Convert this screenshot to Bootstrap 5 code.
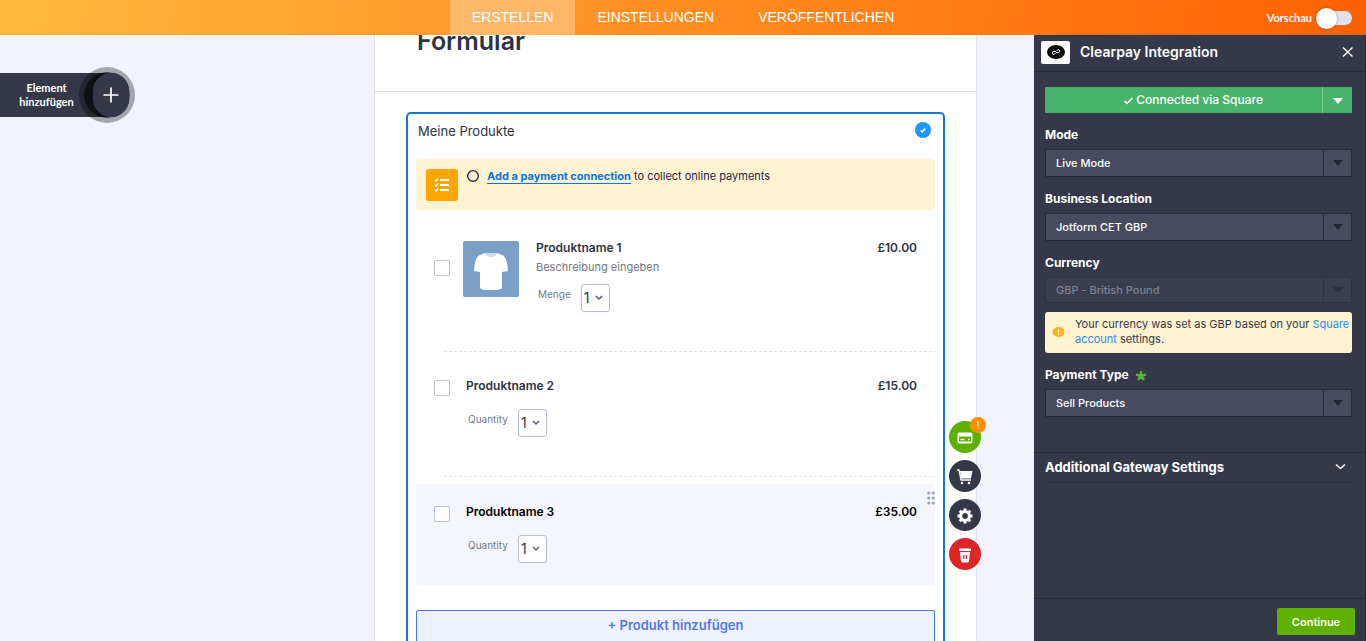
<!DOCTYPE html>
<html lang="de">
<head>
<meta charset="utf-8">
<meta name="viewport" content="width=device-width, initial-scale=1">
<title>Formular erstellen</title>
<link href="https://cdn.jsdelivr.net/npm/bootstrap@5.3.0/dist/css/bootstrap.min.css" rel="stylesheet">
<style>
body{font-family:Inter,"Liberation Sans",sans-serif;font-size:13px;line-height:18px;color:#2c3345;background:#f3f3fe}
.topbar{height:35px;background:linear-gradient(95deg,#ffb93f 0%,#ff9a2b 35%,#ff7a14 72%,#ff6100 100%);z-index:5;display:grid;grid-template-columns:1fr auto 1fr}
.topbar .nav{grid-column:2}
.topbar .nav-link{color:#fff;font-family:"Liberation Sans",Inter,sans-serif;font-size:14px;line-height:35px;padding:0 22px}
.topbar .nav-link.active{background:rgba(255,255,255,.3)}
.preview{font:700 11px/16px Lato,Inter,sans-serif;color:#fff;padding-right:14px}
.topbar .form-check-input{width:32px;height:14px;margin:0;border:0;background:#e2e3ea;border-radius:7px;position:relative;overflow:visible;appearance:none}
.topbar .form-check-input::before{content:"";position:absolute;left:-4px;top:-3px;width:21px;height:21px;border-radius:50%;background:#fff;box-shadow:0 0 3px rgba(0,0,0,.3)}
.workspace{display:grid;grid-template-columns:1fr 603px 57px 332px;grid-template-rows:100%;height:calc(100vh - 35px)}
.add-element{width:129px;height:44px;margin-top:38px;border:0;padding:0;background:#343849;color:#fff;border-radius:0 18px 18px 0;font:700 11px/14px Lato,Inter,sans-serif}
.add-element .caption{width:93px;text-align:center}
.halo{position:absolute;left:79px;top:-6px;width:56px;height:56px;border-radius:50%;border:5px solid rgba(0,0,0,.32);background:rgba(0,0,0,.7);background-clip:padding-box}
.knob{position:absolute;right:0;top:0;width:36px;height:44px;border-radius:18px;background:#343849}
.sheet{background:#fff;border-left:1px solid #e3e4f2;border-right:1px solid #e3e4f2}
.sheet-head{display:flow-root;height:57px;border-bottom:1px solid #d7d8e6;padding-left:42px}
.sheet-head h1{font-size:25px;line-height:32px;font-weight:600;margin:-10px 0 0}
.products{margin:20px 31px 0;border:2px solid #1577d2;border-radius:5px 5px 0 0;padding:0 8px;height:560px}
.group-title{height:45px;padding:8px 4px 0 2px;font-weight:400}
.notice{background:#fff3d1;border-radius:4px;height:51px;padding:10px;font-size:11px;line-height:14px;color:#1f2244}
.notice-icon{width:32px;height:32px;border-radius:3px;background:#ffa500}
.notice a{color:#0a75dd;font-weight:700;text-decoration:none;border-bottom:1px solid #0a75dd}
.product{padding:19px 18px 22px;position:relative}
.product .form-check-input{width:16px;height:16px;margin:3px 0 0;border:1px solid #bcc4d8;border-radius:2px;background-color:#fff;flex-shrink:0}
.product h2{font-size:12px;line-height:18px;font-weight:600;margin:0}
.price{font-size:12px;font-weight:600;line-height:18px}
.describe{font-size:11px;line-height:20px;color:#747781}
.amount{font-size:10px;line-height:20px;color:#747b8c;margin:14px 0 0 2px;gap:10px}
.amount select{appearance:none;width:29px;height:28px;padding:0 2px;border:1px solid #b8bfd0;border-radius:3px;font-size:14px;color:#2c3345;background:#fff url("data:image/svg+xml,%3Csvg xmlns='http://www.w3.org/2000/svg' width='8' height='6'%3E%3Cpath d='M1 1l3 3 3-3' fill='none' stroke='%23556075' stroke-width='1.5'/%3E%3C/svg%3E") no-repeat 13px 10px}
.first-product{margin-top:10px;height:131px}
.first-product .form-check-input{margin-top:21px}
.first-product .amount{margin-top:7px}
.shirt{margin:2px 17px 0 13px}
.second-product{height:118px;margin-top:6px}
.rule{height:1px;margin-left:28px;background:repeating-linear-gradient(90deg,#e3e3e6 0 3px,transparent 3px 5px)}
.third-product{background:#f5f6fc;border-radius:4px;margin-top:7px;height:101px;color:#000}
.grip{position:absolute;right:0;top:7px}
.add-product{margin-top:25px;height:50px;border:1px solid #4d75e8;border-radius:2px 2px 0 0;background:#edf2ff;color:#5476e8;font-size:13px;line-height:28px;padding:0;font-weight:600;display:flex;justify-content:center}
.tools{position:absolute;left:574px;top:386px;gap:7px}
.tools button{width:32px;height:32px;border:0;padding:0;border-radius:50%;background:#343849;position:relative}
.tools .pay{background:#5fb000}
.tools .trash{background:#dc2626}
.alert-dot{position:absolute;right:-5px;top:-4px;width:16px;height:16px;border-radius:50%;background:#fa8f00;color:#fff;font-size:11px;line-height:16px}
.panel{background:#343849;color:#fff;border-right:1px solid #252836}
.panel-head{height:37px;border-bottom:1px solid #272b3a;padding:0 11px 2px 7px}
.logo{width:29px;height:23px;border-radius:2px;background:#fff}
.panel-head h2{font-size:14px;line-height:18px;font-weight:600;margin:0 auto 0 10px}
.panel-body{padding:15px 13px 0 11px}
.panel .connected{background:#47b36c;color:#fff;border:0;border-radius:0;height:26px;font-size:12px;line-height:26px;padding:0 0 0 20px;font-weight:500}
.panel .connected.more{flex:0 0 30px;border-left:1px solid #82d29c;padding:0}
.panel label{font-size:12px;line-height:16px;font-weight:700;display:block}
.field{margin-top:14px}
.field select{appearance:none;display:block;width:100%;height:28px;margin-top:6px;padding:0 38px 0 10px;border:1px solid #262a38;border-radius:1px;color:#fff;font-size:11px;font-weight:500;background:url("data:image/svg+xml,%3Csvg xmlns='http://www.w3.org/2000/svg' width='28' height='28'%3E%3Cpath d='M0 0h1v28H0z' fill='%23262a38'/%3E%3Cpath d='M10 11h10l-5 6z' fill='%23222633'/%3E%3C/svg%3E") no-repeat right center #464b60}
.field select:disabled{opacity:1;color:#7e8291;background:url("data:image/svg+xml,%3Csvg xmlns='http://www.w3.org/2000/svg' width='28' height='28'%3E%3Cpath d='M0 0h1v28H0z' fill='%232d3141'/%3E%3Cpath d='M10 11h10l-5 6z' fill='%232b2f3f'/%3E%3C/svg%3E") no-repeat right center #3a3e50;border-color:#2d3141;height:26px}
.currency-note{margin-top:9px;background:#fff3d1;color:#343849;border-radius:3px;height:41px;padding:5px 0 0 7px;font-size:11px;line-height:15px}
.note-mark{margin:6px 10px 0 0}
.currency-note a{color:#2490f5;text-decoration:none}
.more-settings{border:0;border-top:1px solid #272b3a;margin-top:35px;color:#fff;background:none;padding:6px 15px 0 11px;text-align:left;font-size:13px;line-height:16px;font-weight:700}
.more-settings .inner{height:23px}
.under{height:1px;flex-shrink:0;background:#2b2f3e;margin:0 13px 0 11px}
.panel-foot{border-top:1px solid #272b3a;height:43px;padding:9px 10px 0}
.continue{width:78px;height:27px;border:0;border-radius:2px;background:#5fb000;color:#fff;font-size:11px;font-weight:600;padding:0}
</style>
</head>
<body class="overflow-hidden">
<header class="topbar position-relative">
  <nav class="nav">
    <a class="nav-link active" href="#">ERSTELLEN</a>
    <a class="nav-link" href="#">EINSTELLUNGEN</a>
    <a class="nav-link" href="#">VERÖFFENTLICHEN</a>
  </nav>
  <div class="d-flex align-items-center justify-content-end gap-2 preview">
    <label for="preview">Vorschau</label>
    <input class="form-check-input" type="checkbox" role="switch" id="preview">
  </div>
</header>
<div class="workspace">
  <div>
    <button class="add-element position-relative d-block" type="button">
      <span class="halo"></span>
      <span class="caption d-block position-relative">Element<br>hinzufügen</span>
      <span class="knob d-flex align-items-center justify-content-center"><svg width="16" height="16" viewBox="0 0 16 16" stroke="#fff" stroke-width="1.700"><path d="M8 .5v15M.5 8h15"/></svg></span>
    </button>
  </div>
  <main class="sheet position-relative">
    <div class="sheet-head"><h1>Formular</h1></div>
    <section class="products">
      <div class="group-title d-flex justify-content-between"><span>Meine Produkte</span>
        <svg width="16" height="16" viewBox="0 0 16 16"><circle cx="8" cy="8" r="8" fill="#2196ff"/><path d="M5.500 8.300l1.700 1.700 3-3.500" fill="none" stroke="#fff" stroke-width="1.500"/></svg>
      </div>
      <div class="notice d-flex">
        <span class="notice-icon d-flex align-items-center justify-content-center"><svg width="16" height="16" viewBox="0 0 16 16" fill="none" stroke="#fff" stroke-width="1.600"><path d="M6 3h9M6 8h9M6 13h9" stroke-width="1.800"/><path d="M1 3l1 1 2-2.500M1 8l1 1 2-2.500M1 13l1 1 2-2.500"/></svg></span>
        <svg class="mx-2" width="13" height="14" viewBox="0 0 13 14"><circle cx="7" cy="7" r="5.300" fill="none" stroke="#1f2244" stroke-width="1.300"/></svg>
        <span><a href="#">Add a payment connection</a> to collect online payments</span>
      </div>
      <div class="product first-product d-flex">
        <input class="form-check-input" type="checkbox" aria-label="Produktname 1">
        <svg class="shirt" width="56" height="56" viewBox="0 0 56 56"><rect width="56" height="56" rx="2" fill="#7aa0c8"/><path d="M22 12h12l5 2q5 1 6 16l-6 1v16q-2 2-5 2H22q-3 0-5-2V31l-6-1q1-15 6-16z" fill="#fff"/><path d="M22 12h12q-1 4-6 4t-6-4z" fill="#cfdceb"/></svg>
        <div class="flex-fill"><h2>Produktname 1</h2><div class="describe">Beschreibung eingeben</div>
          <div class="amount d-flex"><label for="q1">Menge</label><select id="q1"><option>1</option></select></div></div>
        <span class="price">£10.00</span>
      </div>
      <div class="rule"></div>
      <div class="product second-product d-flex">
        <input class="form-check-input me-3" type="checkbox" aria-label="Produktname 2">
        <div class="flex-fill"><h2>Produktname 2</h2>
          <div class="amount d-flex"><label for="q2">Quantity</label><select id="q2"><option>1</option></select></div></div>
        <span class="price">£15.00</span>
      </div>
      <div class="rule"></div>
      <div class="product third-product d-flex">
        <input class="form-check-input me-3" type="checkbox" aria-label="Produktname 3">
        <div class="flex-fill"><h2>Produktname 3</h2>
          <div class="amount d-flex"><label for="q3">Quantity</label><select id="q3"><option>1</option></select></div></div>
        <span class="price">£35.00</span>
        <svg class="grip" width="8" height="14" viewBox="0 0 8 14" fill="#9ea2b5"><circle cx="1.800" cy="2" r="1.600"/><circle cx="6.300" cy="2" r="1.600"/><circle cx="1.800" cy="7" r="1.600"/><circle cx="6.300" cy="7" r="1.600"/><circle cx="1.800" cy="12" r="1.600"/><circle cx="6.300" cy="12" r="1.600"/></svg>
      </div>
      <button class="add-product w-100" type="button">+ Produkt hinzufügen</button>
    </section>
    <div class="tools d-flex flex-column">
      <button class="pay" type="button" aria-label="Zahlung"><svg width="16" height="12" viewBox="0 0 16 12"><rect x=".5" y=".5" width="15" height="11" rx="2" fill="#fff"/><path d="M2 4.500h12v5H2z" fill="#5fb000"/><path d="M3.500 7.500h4M11 7.500h1.500" stroke="#fff" stroke-width="1.500"/></svg><span class="alert-dot">!</span></button>
      <button type="button" aria-label="Warenkorb"><svg width="16" height="16" viewBox="0 0 16 16"><path d="M0 1h2l2 10h10" fill="none" stroke="#fff" stroke-width="1.300"/><path d="M3 2h12.500l-1.500 7.500H4.300z" fill="#fff"/><circle cx="5" cy="14" r="1.300" fill="#fff"/><circle cx="12" cy="14" r="1.300" fill="#fff"/></svg></button>
      <button type="button" aria-label="Einstellungen"><svg width="16" height="16" viewBox="0 0 16 16" fill="none" stroke="#fff"><circle cx="8" cy="8" r="4.400" stroke-width="3"/><path d="M8 .5v3M8 12.500v3M.5 8h3M12.500 8h3M2.700 2.700l2 2M11.300 11.300l2 2M2.700 13.300l2-2M11.300 4.700l2-2" stroke-width="3"/></svg></button>
      <button class="trash" type="button" aria-label="Löschen"><svg width="14" height="16" viewBox="0 0 14 16"><path d="M1 1.500h12v2.500H1z" fill="#fff"/><path d="M2 5h10l-1 9q-.2 1.500-2 1.500H5Q3.200 15.500 3 14z" fill="#fff"/><path d="M5.800 8v4M8.300 8v4" stroke="#dc2626" stroke-width="1.200"/></svg></button>
    </div>
  </main>
  <div></div>
  <aside class="panel d-flex flex-column">
    <div class="panel-head d-flex align-items-center">
      <span class="logo d-flex align-items-center justify-content-center"><svg width="18" height="14" viewBox="0 0 18 14"><ellipse cx="9" cy="7" rx="9" ry="7"/><path d="M8.500 8.500L6 9.500 5 7.500 8 6l2 2 3-1.500-1-2L9.500 5.500" fill="none" stroke="#fff"/></svg></span>
      <h2>Clearpay Integration</h2>
      <button type="button" aria-label="Schließen" class="border-0 bg-transparent p-0 d-flex"><svg width="12" height="12" viewBox="0 0 12 12" stroke="#fff" stroke-width="1.400"><path d="M1 1.500l9.500 9M10.500 1.500l-9.500 9"/></svg></button>
    </div>
    <div class="panel-body">
      <div class="d-flex">
        <button class="connected flex-fill" type="button"><svg width="9" height="8" viewBox="0 0 9 8" fill="none" stroke="#fff" stroke-width="1.500"><path d="M.5 4l2.500 2.500L8.500 1"/></svg> Connected via Square</button>
        <button class="connected more" type="button" aria-label="Mehr"><svg width="10" height="6" viewBox="0 0 10 6"><path d="M0 0h10L5 6z" fill="#fff"/></svg></button>
      </div>
      <div class="field"><label for="mode">Mode</label><select id="mode"><option>Live Mode</option></select></div>
      <div class="field"><label for="loc">Business Location</label><select id="loc"><option>Jotform CET GBP</option></select></div>
      <div class="field"><label for="cur">Currency</label><select id="cur" disabled><option>GBP - British Pound</option></select></div>
      <div class="currency-note d-flex"><svg class="note-mark flex-shrink-0" width="13" height="15" viewBox="0 0 13 15"><ellipse cx="6.500" cy="9" rx="6" ry="5" fill="#ffb21f"/><path d="M6.500 6.500v3M6.500 10.500v1.200" stroke="#fff" stroke-width="1.300"/></svg>
        <span>Your currency was set as GBP based on your <a href="#">Square account</a> settings.</span></div>
      <div class="field"><label for="type">Payment Type <svg class="ms-1" width="12" height="10" viewBox="0 0 12 10" stroke="#58b336" stroke-width="2.400"><path d="M6 0v5M1 3.500L6 5l5-1.500M3 9l3-4 3 4" fill="none"/></svg></label><select id="type"><option>Sell Products</option></select></div>
    </div>
    <button class="more-settings w-100" type="button"><span class="inner d-flex justify-content-between">Additional Gateway Settings<svg class="mt-1 me-1" width="11" height="8" viewBox="0 0 11 8" fill="none" stroke="#fff" stroke-width="1.500"><path d="M1 1.500l4.500 4 4.500-4"/></svg></span></button>
    <div class="under"></div>
    <div class="panel-foot mt-auto d-flex justify-content-end"><button class="continue" type="button">Continue</button></div>
  </aside>
</div>
<script src="https://cdn.jsdelivr.net/npm/bootstrap@5.3.0/dist/js/bootstrap.bundle.min.js"></script>
</body>
</html>
